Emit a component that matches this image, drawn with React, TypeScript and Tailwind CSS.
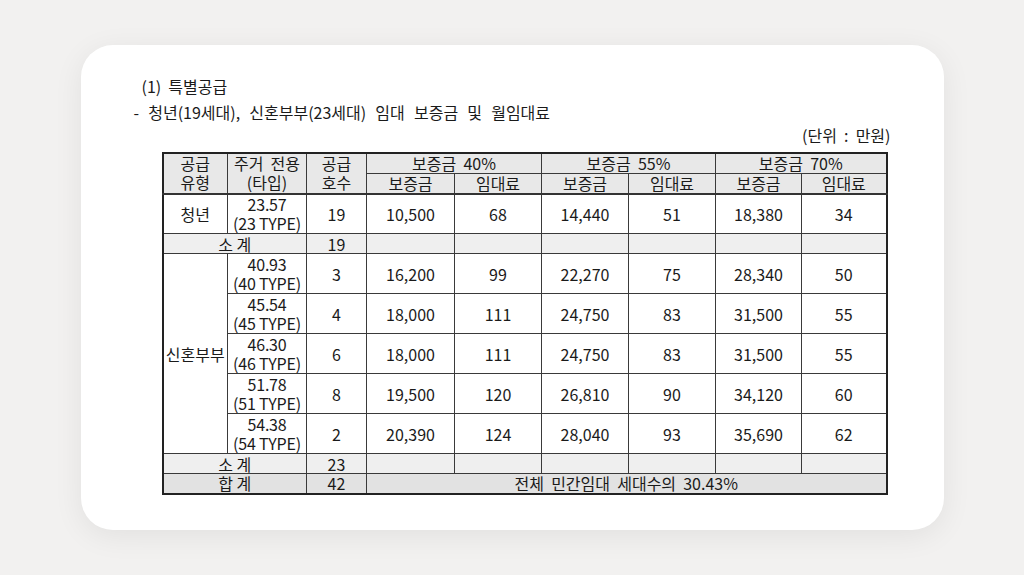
import React from "react";

interface TypeRow {
    area: string;
    type: string;
    units: string;
    values: string[];
}

const youthRow: TypeRow = { area: "23.57", type: "(23 TYPE)", units: "19", values: ["10,500", "68", "14,440", "51", "18,380", "34"] };

const coupleRows: TypeRow[] = [
    { area: "40.93", type: "(40 TYPE)", units: "3", values: ["16,200", "99", "22,270", "75", "28,340", "50"] },
    { area: "45.54", type: "(45 TYPE)", units: "4", values: ["18,000", "111", "24,750", "83", "31,500", "55"] },
    { area: "46.30", type: "(46 TYPE)", units: "6", values: ["18,000", "111", "24,750", "83", "31,500", "55"] },
    { area: "51.78", type: "(51 TYPE)", units: "8", values: ["19,500", "120", "26,810", "90", "34,120", "60"] },
    { area: "54.38", type: "(54 TYPE)", units: "2", values: ["20,390", "124", "28,040", "93", "35,690", "62"] }
];

const rates = ["40%", "55%", "70%"];
const cell = "border border-[#3a3a3a] p-0 text-center align-middle";

const TypeCell: React.FC<{ row: TypeRow }> = ({ row }) => (
    <td className={cell + " tracking-[-0.2px]"}>
        <div className="leading-[19px]">{row.area}</div>
        <div className="leading-[19px]">{row.type}</div>
    </td>
);

const ValueCells: React.FC<{ values: string[] }> = ({ values }) => (
    <>
        {values.map((v, i) => (
            <td key={i} className={cell}>{v}</td>
        ))}
    </>
);

const SubtotalRow: React.FC<{ label: string; total: string }> = ({ label, total }) => (
    <tr className="h-[20px] bg-[#efefef] leading-[18px]">
        <td colSpan={2} className={cell}>{label}</td>
        <td className={cell}>{total}</td>
        {[0, 1, 2, 3, 4, 5].map((i) => (
            <td key={i} className={cell}></td>
        ))}
    </tr>
);

const App: React.FC = () => {
    return (
        <div className="flex h-[575px] w-full items-center justify-center bg-[#f2f1f0] font-['Noto_Sans_CJK_KR',sans-serif] text-[16px] text-[#1a1a1a]">
            <div className="h-[485px] w-[863px] rounded-[32px] bg-white pt-[30px] shadow-[0_6px_30px_rgba(0,0,0,0.07)]">
                <div className="pl-[61px] leading-[23px] whitespace-pre">(1)  특별공급</div>
                <div className="mt-[3px] pl-[53px] leading-[23px] whitespace-pre [word-spacing:1px]">-  청년(19세대),  신혼부부(23세대)  임대  보증금  및  월임대료</div>
                <div className="pr-[53px] text-right leading-[23px] whitespace-pre">(단위  :  만원)</div>
                <table className="ml-[81px] mt-[5px] table-fixed border-collapse border-2 border-[#222]">
                    <colgroup>
                        <col className="w-[65px]" />
                        <col className="w-[79px]" />
                        <col className="w-[60px]" />
                        <col className="w-[88px]" />
                        <col className="w-[87px]" />
                        <col className="w-[87px]" />
                        <col className="w-[87px]" />
                        <col className="w-[86px]" />
                        <col className="w-[85px]" />
                    </colgroup>
                    <thead className="bg-[#e8e8e8]">
                        <tr className="h-[20px] leading-[19px]">
                            <td rowSpan={2} className={cell}>공급<br />유형</td>
                            <td rowSpan={2} className={cell + " whitespace-pre"}>주거  전용<br />(타입)</td>
                            <td rowSpan={2} className={cell}>공급<br />호수</td>
                            {rates.map((r) => (
                                <td key={r} colSpan={2} className={cell + " whitespace-pre"}>보증금  {r}</td>
                            ))}
                        </tr>
                        <tr className="h-[20px] border-b-2 border-[#333] leading-[18px]">
                            {rates.map((r) => (
                                <React.Fragment key={r}>
                                    <td className={cell}>보증금</td>
                                    <td className={cell}>임대료</td>
                                </React.Fragment>
                            ))}
                        </tr>
                    </thead>
                    <tbody>
                        <tr className="h-[40px]">
                            <td className={cell}>청년</td>
                            <TypeCell row={youthRow} />
                            <td className={cell}>{youthRow.units}</td>
                            <ValueCells values={youthRow.values} />
                        </tr>
                        <SubtotalRow label="소 계" total="19" />
                        {coupleRows.map((row, i) => (
                            <tr key={row.area} className="h-[40px]">
                                {i === 0 && (
                                    <td rowSpan={5} className={cell}>신혼부부</td>
                                )}
                                <TypeCell row={row} />
                                <td className={cell}>{row.units}</td>
                                <ValueCells values={row.values} />
                            </tr>
                        ))}
                        <SubtotalRow label="소 계" total="23" />
                        <tr className="h-[20px] bg-[#e2e2e2] leading-[18px]">
                            <td colSpan={2} className={cell}>합 계</td>
                            <td className={cell}>42</td>
                            <td colSpan={6} className={cell + " whitespace-pre"}>전체  민간임대  세대수의  30.43%</td>
                        </tr>
                    </tbody>
                </table>
            </div>
        </div>
    );
};

export default App;
